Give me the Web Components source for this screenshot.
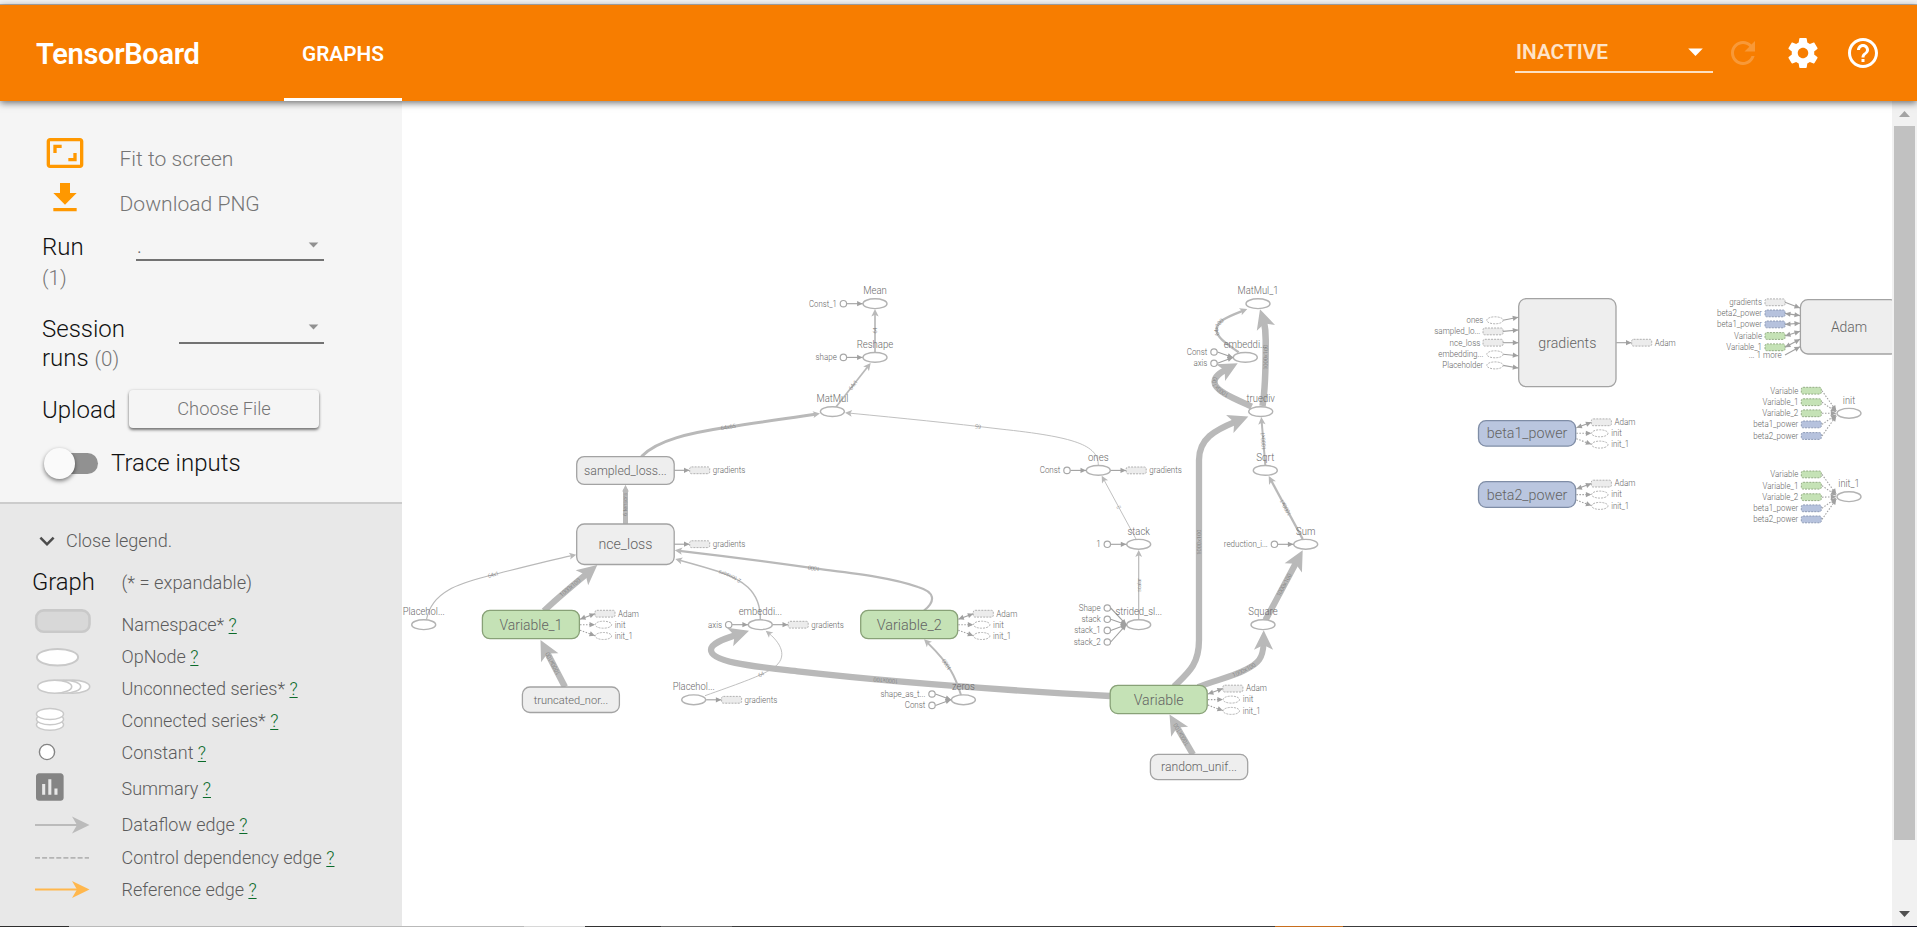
<!DOCTYPE html>
<html lang="en">
<head>
<meta charset="utf-8">
<title>TensorBoard</title>
<style>
html,body{margin:0;height:100%;overflow:hidden;background:#fff}
body{font-family:Roboto,"Liberation Sans",sans-serif}
</style>
</head>
<body>
<tb-app></tb-app>
<script>
class Base extends HTMLElement{
  constructor(){super();this.attachShadow({mode:'open'});}
  put(html){this.shadowRoot.innerHTML=html;}
}

customElements.define('tb-app',class extends Base{
  connectedCallback(){this.put(`<style>
    :host{display:flex;flex-direction:column;height:927px;width:1917px;overflow:hidden}
    .strip{height:4px;background:#f1f1f1;border-bottom:1px solid #b4b4b4;flex:none}
    main{flex:1;display:flex;min-height:0}
    .task{height:1px;flex:none;background:linear-gradient(90deg,#2e2e2e 69px,#b9b9b9 69px 524px,#d8d8d8 524px 585px,#333 585px 661px,#666 661px 732px,#3c3c3c 732px 1275px,#c86e1e 1275px 1343px,#3c3c3c 1343px 1790px,#0c0c1c 1790px)}
    </style>
    <div class="strip"></div>
    <tb-header></tb-header>
    <main><tb-sidebar></tb-sidebar><tb-graph></tb-graph><tb-scrollbar></tb-scrollbar></main>
    <div class="task"></div>`);}
});

customElements.define('tb-icon',class extends Base{
  connectedCallback(){
    const P={
      refresh:'M17.65 6.35C16.2 4.9 14.21 4 12 4c-4.42 0-7.99 3.58-7.99 8s3.57 8 7.99 8c3.73 0 6.84-2.55 7.73-6h-2.08c-.82 2.33-3.04 4-5.65 4-3.31 0-6-2.69-6-6s2.69-6 6-6c1.66 0 3.14.69 4.22 1.78L13 11h7V4l-2.35 2.35z',
      settings:'M19.43 12.98c.04-.32.07-.64.07-.98s-.03-.66-.07-.98l2.11-1.65c.19-.15.24-.42.12-.64l-2-3.46c-.12-.22-.39-.3-.61-.22l-2.49 1c-.52-.4-1.08-.73-1.69-.98l-.38-2.65C14.46 2.18 14.25 2 14 2h-4c-.25 0-.46.18-.49.42l-.38 2.65c-.61.25-1.17.59-1.69.98l-2.49-1c-.23-.09-.49 0-.61.22l-2 3.46c-.13.22-.07.49.12.64l2.11 1.65c-.04.32-.07.65-.07.98s.03.66.07.98l-2.11 1.65c-.19.15-.24.42-.12.64l2 3.46c.12.22.39.3.61.22l2.49-1c.52.4 1.08.73 1.69.98l.38 2.65c.03.24.24.42.49.42h4c.25 0 .46-.18.49-.42l.38-2.65c.61-.25 1.17-.59 1.69-.98l2.49 1c.23.09.49 0 .61-.22l2-3.46c.12-.22.07-.49-.12-.64l-2.11-1.65zM12 15.5c-1.93 0-3.5-1.57-3.5-3.5s1.57-3.5 3.5-3.5 3.5 1.57 3.5 3.5-1.57 3.5-3.5 3.5z',
      help:'M11 18h2v-2h-2v2zm1-16C6.48 2 2 6.48 2 12s4.48 10 10 10 10-4.48 10-10S17.52 2 12 2zm0 18c-4.41 0-8-3.59-8-8s3.59-8 8-8 8 3.59 8 8-3.59 8-8 8zm0-14c-2.21 0-4 1.79-4 4h2c0-1.1.9-2 2-2s2 .9 2 2c0 2-3 1.75-3 5h2c0-2.25 3-2.5 3-5 0-2.21-1.79-4-4-4z',
      fit:'M19 12h-2v3h-3v2h5v-5zM7 9h3V7H5v5h2V9zm14-6H3c-1.1 0-2 .9-2 2v14c0 1.1.9 2 2 2h18c1.1 0 2-.9 2-2V5c0-1.1-.9-2-2-2zm0 16.01H3V4.99h18v14.02z',
      download:'M19 9h-4V3H9v6H5l7 7 7-7zM5 18v2h14v-2H5z',
      drop:'M7 10l5 5 5-5z',
      expand:'M16.59 8.59L12 13.17 7.41 8.59 6 10l6 6 6-6z'
    };
    this.put(`<style>:host{display:block;flex:none}svg{display:block;width:100%;height:100%;fill:currentColor}</style><svg viewBox="0 0 24 24"><path d="${P[this.getAttribute('name')]}"/></svg>`);
  }
});

customElements.define('tb-header',class extends Base{
  connectedCallback(){this.put(`<style>
    :host{display:flex;flex:none;height:96px;background:#f77d00;color:#fff;box-shadow:0 2px 7px rgba(0,0,0,.55);position:relative;z-index:2;font-weight:600}
    .title{width:248px;padding-left:36px;font-size:29px;line-height:98px;letter-spacing:-.3px;white-space:nowrap}
    .tab{width:118px;box-sizing:border-box;border-bottom:3px solid #fff;text-align:center;font-size:20.8px;line-height:98px;height:96px}
    .right{margin-left:auto;display:flex;align-items:center;padding-right:36px;gap:24px}
    .sel{width:198px;height:38px;box-sizing:border-box;border-bottom:2px solid #fde0c2;display:flex;align-items:center;justify-content:space-between;margin-right:-12px;margin-top:2px;padding-bottom:3px}
    .sel span{font-size:20.8px;color:#fee3c8;padding-left:1px}
    .sel tb-icon{width:35px;height:35px;margin-right:.5px;margin-top:0}
    .right>tb-icon{width:36px;height:36px}
    .dim{opacity:.22}
    </style>
    <div class="title">TensorBoard</div><div class="tab">GRAPHS</div>
    <div class="right"><div class="sel"><span>INACTIVE</span><tb-icon name="drop"></tb-icon></div>
    <tb-icon class="dim" name="refresh"></tb-icon><tb-icon name="settings"></tb-icon><tb-icon name="help"></tb-icon></div>`);}
});

customElements.define('tb-select',class extends Base{
  connectedCallback(){this.put(`<style>
    :host{display:flex;box-sizing:border-box;height:34px;border-bottom:2px solid #727272;align-items:center;justify-content:space-between;color:#666;font-size:20px}
    tb-icon{width:23px;height:23px;color:#919191;margin-right:-1px;margin-top:2px}
    span{padding-left:1px;margin-top:6px}
    </style><span><slot></slot></span><tb-icon name="drop"></tb-icon>`);}
});

customElements.define('tb-sidebar',class extends Base{
  connectedCallback(){this.put(`<style>
    :host{display:flex;flex-direction:column;width:402px;flex:none;background:#f5f5f5;font-weight:300}
    .controls{height:401px;box-sizing:border-box;padding:30px 78px 0 42px;flex:none}
    .act{height:45px;display:flex;align-items:flex-start;box-sizing:border-box;padding-top:2px;color:#757575;font-size:21.1px}
    .act tb-icon{width:40px;height:40px;color:#ff9800;margin:0 35px 0 2.5px}
    .act span{line-height:32px;margin-top:9.5px}
    .row{display:flex;justify-content:space-between;color:#111;font-size:24px}
    .row div{line-height:var(--lh)}
    .row small{font-size:20.5px;color:#757575}
    .run{--lh:30px;margin-top:11px;height:60px}
    .ses{--lh:29px;margin-top:22.5px;height:58px}
    .up{--lh:41px;margin-top:17.5px;height:38px;justify-content:flex-start}
    .btn{width:190px;height:38px;border-radius:4px;margin-left:auto;margin-right:5px;box-shadow:0 2px 3px rgba(0,0,0,.5),0 0 3px rgba(0,0,0,.12);text-align:center;font-size:18.3px;color:#757575;--lh:38px}
    .tr{--lh:31px;margin-top:20px;justify-content:flex-start;align-items:center;height:31px}
    .tog{width:39px;height:21px;border-radius:11px;background:#919191;margin:0 13px 0 17px;display:flex;align-items:center}
    .tog i{width:30.6px;height:30.6px;border-radius:50%;background:#fafafa;box-shadow:0 2px 4px rgba(0,0,0,.5);margin-left:-15px;flex:none}
    </style>
    <div class="controls">
      <div class="act"><tb-icon name="fit"></tb-icon><span>Fit to screen</span></div>
      <div class="act"><tb-icon name="download"></tb-icon><span>Download PNG</span></div>
      <div class="row run"><div>Run<br><small>(1)</small></div><tb-select style="width:188px;margin-top:-5px">.</tb-select></div>
      <div class="row ses"><div>Session<br>runs <small>(0)</small></div><tb-select style="width:145px;margin-top:-5px"></tb-select></div>
      <div class="row up"><div>Upload</div><div class="btn">Choose File</div></div>
      <div class="row tr"><span class="tog"><i></i></span><div>Trace inputs</div></div>
    </div>
    <tb-legend></tb-legend>`);}
});

customElements.define('tb-legend-row',class extends Base{
  connectedCallback(){
    const h=this.getAttribute('h')||32;
    this.put(`<style>
    :host{display:flex;height:${h}px;align-items:center;color:#5c5c5c;font-size:18px;line-height:32px}
    svg{width:90px;height:${h}px;flex:none;display:block;margin-right:-.5px}
    span{margin-top:-1px}
    u{color:#0b6b2b;text-underline-offset:2px}
    </style><svg viewBox="32 0 90 ${h}"></svg><span><slot></slot> <u>?</u></span>`);
    this.shadowRoot.querySelector('svg').innerHTML=({
      ns:'<rect x="36.2" y="1.4" width="53.3" height="21.4" rx="7.5" fill="#d8d8d8" stroke="#c9c9c9" stroke-width="2.6"/>',
      op:'<ellipse cx="57.5" cy="16.2" rx="20.6" ry="8.3" fill="#fff" stroke="#c9c9c9" stroke-width="2"/>',
      un:'<g fill="#fff" stroke="#c9c9c9" stroke-width="1.6"><ellipse cx="72.7" cy="13.7" rx="17" ry="6.6"/><ellipse cx="63.7" cy="13.7" rx="17" ry="6.6"/><ellipse cx="54.7" cy="13.7" rx="17" ry="6.6"/></g>',
      co:'<g fill="#fff" stroke="#c9c9c9" stroke-width="1.4"><ellipse cx="50" cy="19.8" rx="13.6" ry="5.5"/><ellipse cx="50" cy="14.3" rx="13.6" ry="5.5"/><ellipse cx="50" cy="9" rx="13.6" ry="5.5"/></g>',
      c:'<circle cx="47" cy="15" r="7.6" fill="#fff" stroke="#848484" stroke-width="1.4"/>',
      su:'<path transform="translate(31.4 -.4) scale(1.535)" fill="#848484" d="M19 3H5c-1.1 0-2 .9-2 2v14c0 1.1.9 2 2 2h14c1.1 0 2-.9 2-2V5c0-1.1-.9-2-2-2zM9 17H7v-7h2v7zm4 0h-2V7h2v10zm4 0h-2v-4h2v4z"/>',
      da:'<path d="M35 16H78" stroke="#bbb" stroke-width="2"/><path fill="#bbb" d="M89.5 16L72 7.5 77 16 72 24.5z"/>',
      ct:'<path d="M35 15.8H89" stroke="#b4b4b4" stroke-width="1.7" stroke-dasharray="5 2.1"/>',
      re:'<path d="M35 15.6H78" stroke="#ffb74d" stroke-width="2"/><path fill="#ffb74d" d="M89.5 15.6L72 7.1 77 15.6 72 24.1z"/>'
    })[this.getAttribute('kind')];
  }
});

customElements.define('tb-legend',class extends Base{
  connectedCallback(){this.put(`<style>
    :host{display:block;flex:1;box-sizing:border-box;border-top:2px solid #ccc;background:#e8e8e8;padding:21px 0 0 32px;font-size:18.1px;color:#5c5c5c}
    .close{display:flex;align-items:center;height:31px;padding-bottom:1px}
    .close tb-icon{width:30px;height:30px;color:#4c4c4c;margin-right:4px}
    .graph{display:flex;align-items:center;height:32px;margin:9px 0 11px;font-size:18.3px}
    .graph b{font-weight:300;font-size:23.8px;color:#111;width:89.5px;line-height:32px}
    </style>
    <div class="close"><tb-icon name="expand"></tb-icon>Close legend.</div>
    <div class="graph"><b>Graph</b>(* = expandable)</div>
    <tb-legend-row kind="ns">Namespace*</tb-legend-row>
    <tb-legend-row kind="op">OpNode</tb-legend-row>
    <tb-legend-row kind="un">Unconnected series*</tb-legend-row>
    <tb-legend-row kind="co">Connected series*</tb-legend-row>
    <tb-legend-row kind="c">Constant</tb-legend-row>
    <tb-legend-row kind="su" h="40">Summary</tb-legend-row>
    <tb-legend-row kind="da" h="33">Dataflow edge</tb-legend-row>
    <tb-legend-row kind="ct">Control dependency edge</tb-legend-row>
    <tb-legend-row kind="re">Reference edge</tb-legend-row>`);}
});

customElements.define('tb-scrollbar',class extends Base{
  connectedCallback(){this.put(`<style>
    :host{display:flex;flex-direction:column;align-items:center;width:25px;flex:none;background:#f1f1f1;box-sizing:border-box;padding-top:10px}
    svg{width:11px;height:6px;display:block;flex:none}
    .thumb{width:21px;height:714px;margin:9px 0 71px;background:#c1c1c1;flex:none}
    </style><svg viewBox="0 0 11 6" fill="#a3a3a3"><path d="M0 6L5.5 0 11 6z"/></svg><div class="thumb"></div><svg viewBox="0 0 11 6" fill="#505050"><path d="M0 0L5.5 6 11 0z"/></svg>`);}
});

customElements.define('tb-graph',class extends Base{
  connectedCallback(){
    let edges='',shapes='',labels='',n=0;
    const GREY=['#eee','#a3a3a3'],GREEN=['#c5e2b6','#88a177'],BLUE=['#bac6df','#7f8da6'];
    const NOTE_W={'gradients':32.7,'Adam':21,'init':10.7,'init_1':18,'Const_1':27.7,'shape':21.3,'Const':20.7,'axis':14,'reduction_i...':44,'Shape':22,'stack':19.3,'stack_1':26.5,'stack_2':27,'shape_as_t...':45,'ones':16.7,'sampled_lo...':46,'nce_loss':30.7,'embedding...':45,'Placeholder':41,'beta1_power':45,'beta2_power':45,'Variable':28,'Variable_1':35.7,'Variable_2':36,'... 1 more':33};
    const list=[];
    const edge=(d,w,a,t,len)=>{
      edges+=`<path id="e${n}" d="${d}" fill="none" stroke="#b9b9b9" stroke-width="${w}"/>`;
      if(t)edges+=`<text class="el" dy="1.9"><textPath href="#e${n}" startOffset="50%" textLength="${len}">${t}</textPath></text>`;
      list.push([n++,a]);
    };
    const text=(x,y,t,w,fs,anchor='middle',cls='')=>{
      const tl=w?` textLength="${w}" lengthAdjust="spacingAndGlyphs"`:'';
      labels+=`<text class="${cls}" x="${x}" y="${y}" font-size="${fs}" text-anchor="${anchor}"${tl}>${t}</text>`;
    };
    const box=(x,y,w,h,c,t,tw,base,fs)=>{
      shapes+=`<rect x="${x}" y="${y}" width="${w}" height="${h}" rx="7.5" fill="${c[0]}" stroke="${c[1]}" stroke-width="1.3"/>`;
      text(x+w/2,base,t,tw,fs,'middle','n');
    };
    const op=(x,y,t,w)=>{
      shapes+=`<ellipse cx="${x}" cy="${y}" rx="12" ry="4.9" fill="#fff" stroke="#b3b3b3" stroke-width="1.4"/>`;
      text(x,y-9.6,t,w,10);
    };
    const head=(x,y,ang)=>`<path d="M0 0L-5.5 -2.6V2.6z" fill="#a0a0a0" transform="translate(${x} ${y}) rotate(${ang})"/>`;
    const link=(x1,y1,x2,y2,{both,dash}={})=>{
      const a=Math.atan2(y2-y1,x2-x1)*180/Math.PI;
      shapes+=`<path d="M${x1} ${y1}L${x2} ${y2}" stroke="#a0a0a0" stroke-width="1.1" ${dash?'stroke-dasharray="1.5 1.5"':''}/>`+head(x2,y2,a)+(both?head(x1,y1,a+180):'');
    };
    const chip=(x,y,c=['#ececec','#a9a9a9'])=>{shapes+=`<rect x="${x-10}" y="${y-3.4}" width="20" height="6.8" rx="1.8" fill="${c[0]}" stroke="${c[1]}" stroke-width=".9" stroke-dasharray="2 1.1"/>`;};
    const oval=(x,y)=>{shapes+=`<ellipse cx="${x}" cy="${y}" rx="8.2" ry="3.5" fill="#fff" stroke="#a9a9a9" stroke-width=".9" stroke-dasharray="2 1.1"/>`;};
    const note=(x,y,t,anchor)=>text(x,y+2.8,t,NOTE_W[t],8.2,anchor,'s');
    const konst=(x,y,t,tx,ty)=>{
      link(x+3.4,y,tx,ty);
      shapes+=`<circle cx="${x}" cy="${y}" r="3.2" fill="#fff" stroke="#a8a8a8" stroke-width="1.2"/>`;
      note(x-6.6,y,t,'end');
    };
    const outChip=(x,y,t)=>{link(x,y,x+15.2,y);chip(x+25.4,y);note(x+38.4,y,t,'start');};
    const outs=(x,y)=>{
      link(x+.6,y-5.5,x+15.6,y-11,{both:1});chip(x+25.6,y-11);note(x+38.6,y-11,'Adam','start');
      link(x+.6,y,x+15.6,y,{dash:1});oval(x+24,y);note(x+35.4,y,'init','start');
      link(x+.6,y+5.5,x+15.6,y+11,{dash:1});oval(x+24,y+11.3);note(x+35.4,y+11.3,'init_1','start');
    };

    edge('M625.5 524V484.8',5,7,'6 tensors',23);
    edge('M641.5 456.5C657 440 690 433 726.7 427.3C760 422 790 418 820 413.5',3,7,'64x65',15);
    edge('M836 407L870.7 363',1.7,7.5,'64x1',11);
    edge('M875 352V309',1.7,7.5,'64',6);
    edge('M1098.3 465C1098 445 1075 437 1000 429C950 423 900 418 845 412.7',.9,7,'65',6);
    edge('M1136 539L1101.7 475.7',.9,7,'2',3);
    edge('M1138.7 620V550',1.2,7,'scalar',14);
    edge('M1238.7 352.3C1230 346 1216.5 338 1216.5 330C1216.5 320 1230 316 1247.3 309',2.3,7.5,'64x100',18);
    edge('M1262.5 406C1266 385 1265.7 360 1265.7 340C1265.7 328 1264 318 1260 309.3',6.5,19.5,'1000x100',25);
    edge('M1251.7 406.5C1235 399 1214.5 391 1214.5 382C1214.5 374 1226 370 1237.7 363.3',6.3,19.5,'1000x100',25);
    edge('M1174 686.5C1188 673 1199 665 1199 640V460C1199 435 1220 428 1248.3 416.5',6.3,20,'1000x100',25);
    edge('M1265.3 465L1261.3 417',2,7.5,'1000x1',18);
    edge('M1302.7 539L1268.7 476',2.3,8,'1000x1',18);
    edge('M1265.5 620L1302.7 550.3',6.3,20,'1000x100',25);
    edge('M1198 687C1212 681 1232 677 1245 670C1262 662 1264.3 656 1263.7 630.3',6,19.5,'1000x100',25);
    edge('M1110 696C1000 690 900 683 800 671.7C760 667 711 663 711 650C711 642 728 638 749 630.7',6.3,20,'1000x100',25);
    edge('M1193 754.5L1169.5 714.5',6.3,20,'1000x100',25);
    edge('M565 687L540.5 640',6.3,20,'1000x100',25);
    edge('M544 611C556 599 572 586 597.3 565',6.3,20,'1000x100',25);
    edge('M426.5 619.5C432 590 462 583 490 575.5C520 568 550 560 576.3 554.7',1.2,7,'64x1',11);
    edge('M760.3 619.5C761 590 740 579 720 572C705 567 690 563 675.3 559',1.5,7,'2 tensors',24);
    edge('M924 610.5C936 601 935 592 918 587C890 577 850 573 816.7 568.7C770 562 720 555.5 674.7 550.3',2.2,7.5,'1000',12);
    edge('M961 695C955 676 950 664 924 639.3',2,7.5,'1000',12);
    edge('M705 695.7C735 685 758 677 770 670C790 659 782 643 765.7 630.7',.9,7,'64',6);

    box(576.7,524,97.5,40.5,GREY,'nce_loss',54,549.3,15);
    box(482.4,610.3,97,28.4,GREEN,'Variable_1',63,630,15);
    box(522.4,687,97,25.5,GREY,'truncated_nor...',74.5,703.8,11.5);
    box(860.7,610.3,97,28.4,GREEN,'Variable_2',65,630,15);
    box(1110.2,685.3,97,28.3,GREEN,'Variable',50,705,15);
    box(1150.4,754.4,97.3,25.3,GREY,'random_unif...',76,770.8,12.3);
    box(576.7,456.6,97.5,27.8,GREY,'sampled_loss...',82.7,474.8,13);
    box(1518.7,298.7,97.3,88,GREY,'gradients',58,348,15);
    box(1478.5,420.7,97.2,25.4,BLUE,'beta1_power',80.5,438,15);
    box(1478.5,481.7,97.2,25.6,BLUE,'beta2_power',80.5,499.8,15);
    box(1800.4,299.7,97.3,54.3,GREY,'Adam',36.3,332,15);

    op(875,303.7,'Mean',23.7);op(875,357.4,'Reshape',36.7);op(832.4,411.6,'MatMul',32);
    op(1098.3,470.4,'ones',20.7);op(1138.7,544.3,'stack',22.3);op(1138.7,624.7,'strided_sl...',46.5);
    op(1258,303.7,'MatMul_1',41);op(1245.3,357.4,'embeddi...',43.3);op(1260.7,411.6,'truediv',28.3);
    op(1265.3,470.4,'Sqrt',18);op(1305.7,544.3,'Sum',19.3);op(1263,624.7,'Square',29.3);
    op(760.3,624.7,'embeddi...',43.3);op(423.7,624.7,'Placehol...',42);op(693.7,699.8,'Placehol...',42);
    op(963.4,699.8,'zeros',22.7);op(1849,413.3,'init',12.3);op(1849,496.7,'init_1',21.3);

    konst(843.4,303.7,'Const_1',862.6,303.7);konst(843.4,357.4,'shape',862.6,357.4);
    konst(1067,470.4,'Const',1086,470.4);konst(1107.3,544.3,'1',1126.3,544.3);
    konst(1274.4,544.3,'reduction_i...',1293.4,544.3);konst(728.7,624.7,'axis',747.9,624.7);
    konst(1214,352,'Const',1233,357.4);konst(1214,363.3,'axis',1233,357.4);
    konst(1107.3,608,'Shape',1126.3,624.7);konst(1107.3,619.3,'stack',1126.3,624.7);
    konst(1107.3,630.4,'stack_1',1126.3,624.7);konst(1107.3,642,'stack_2',1126.3,624.7);
    konst(932,694,'shape_as_t...',951,699.8);konst(932,705.4,'Const',951,699.8);

    outChip(674.3,470.3,'gradients');outChip(674.3,544.2,'gradients');outChip(772.8,624.7,'gradients');
    outChip(706.2,699.8,'gradients');outChip(1110.8,470.4,'gradients');outChip(1616.3,342.7,'Adam');
    outs(579.4,624.7);outs(957.7,624.7);outs(1207.3,699.6);outs(1575.8,433.3);outs(1575.8,494.6);

    [['ones',1,320.3,317.3],['sampled_lo...',0,331.4,330],['nce_loss',0,342.7,342.7],['embedding...',1,354.3,355.7],['Placeholder',1,365.4,368]].forEach(([t,o,y,ty])=>{
      link(1503,y,1518.3,ty);
      o?oval(1495,y):chip(1493,y);
      note(o?1483.3:1480.3,y,t,'end');
    });
    const G=['#c5e2b6','#8ba57c'],B=['#b6c2dd','#8794b0'];
    [['gradients',undefined,302.3,308],['beta2_power',B,313.4,315.6],['beta1_power',B,324.4,323.3],['Variable',G,336,331.3],['Variable_1',G,347.3,339.3]].forEach(([t,c,y,ty],i)=>{
      link(1785,y,1800,ty,{both:i>0});chip(1775,y,c);note(1762,y,t,'end');
    });
    link(1785,355,1800,346.7);note(1781.7,355.5,'... 1 more','end');
    for(const [ys,cy] of [[[390.7,402.2,413.3,424.4,436],413.3],[[474.4,485.7,497.2,508.3,519.4],496.7]])
      ['Variable','Variable_1','Variable_2','beta1_power','beta2_power'].forEach((t,i)=>{
        link(1822,ys[i],1836.3,cy+(i-2)*1.2,{dash:1});
        chip(1811.3,ys[i],i<3?G:B);note(1798.3,ys[i],t,'end');
      });

    this.put(`<style>
      :host{display:block;flex:1;min-width:0;background:#fff;overflow:hidden}
      svg{display:block;width:1490px;height:825px;font-family:Roboto,"Liberation Sans",sans-serif;font-weight:300}
      text{fill:#6a6a6a}.n{fill:#646464}.s{fill:#646464}
      .el{font-size:5.8px;fill:#757575;text-anchor:middle}
      </style><svg viewBox="402 101 1490 825">${edges}${shapes}${labels}</svg>`);
    for(const [id,s] of list){
      const p=this.shadowRoot.getElementById('e'+id),L=p.getTotalLength();
      const tip=p.getPointAtLength(L),back=p.getPointAtLength(L-s*.7);
      const a=Math.atan2(tip.y-back.y,tip.x-back.x)*180/Math.PI;
      p.setAttribute('stroke-dasharray',`${L-s*.65} 9999`);
      p.insertAdjacentHTML('afterend',`<path fill="#b9b9b9" transform="translate(${tip.x} ${tip.y}) rotate(${a})" d="M0 0L${-s} ${-s*.49}L${-s*.76} 0L${-s} ${s*.49}z"/>`);
    }
  }
});
</script>
</body>
</html>
